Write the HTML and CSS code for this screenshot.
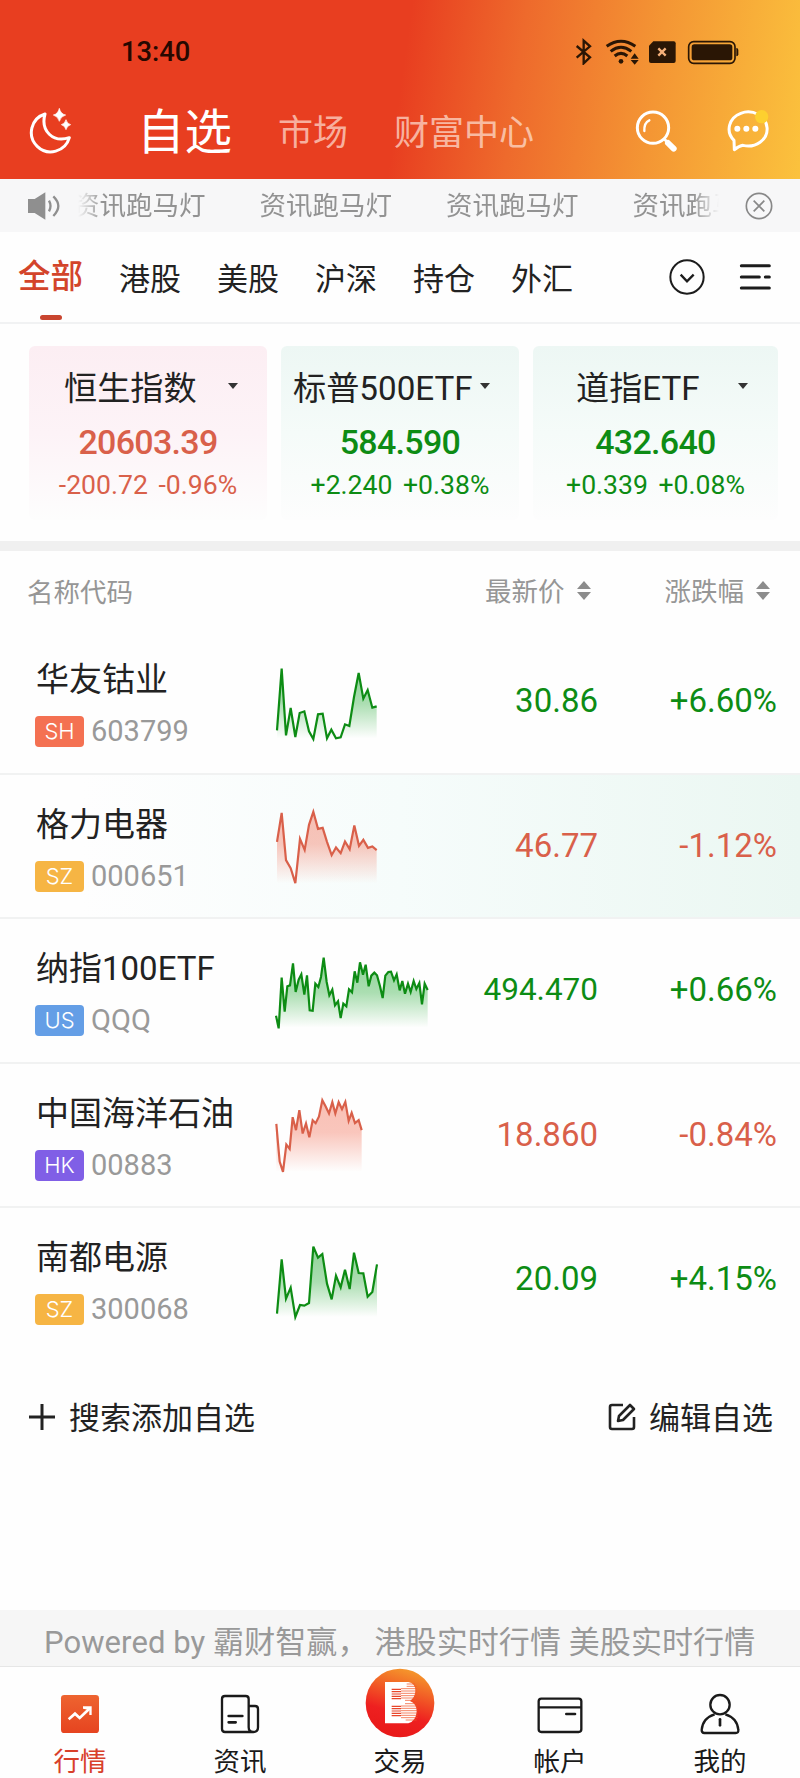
FILE: index.html
```
<!DOCTYPE html>
<html lang="zh-CN">
<head>
    <meta charset="utf-8">
    <title>自选</title>
    <meta name="viewport" content="width=device-width, initial-scale=1.0">
    <link rel="stylesheet" href="styles.css">
</head>
<body>
<header class="header">
    <div class="status">
        <span class="status-time">13:40</span>
        <svg class="status-icons" width="164" height="28" viewBox="0 0 492 84">
            <!-- bluetooth -->
            <path d="M5 27 45 61 26 79V11L45 28 5 62" fill="none" stroke="#2a1605" stroke-width="7"/>
            <!-- wifi -->
            <g fill="none" stroke="#2a1605" stroke-width="9">
                <path d="M95 28Q138-2 181 28"/>
                <path d="M107 43Q138 19 169 43"/>
                <path d="M119 57Q138 41 157 57"/>
            </g>
            <g fill="#2a1605">
                <circle cx="138" cy="73" r="7"/>
                <path d="M167 65 179 49 191 65zM167 69 179 83 191 69z"/>
                <path d="M235 13H296Q302 13 302 19V72Q302 78 296 78H228Q222 78 222 72V26z"/>
                <rect x="350" y="22" width="122" height="48" rx="8"/>
                <path d="M484 33q6 0 6 6v13q0 6-6 6z"/>
            </g>
            <path d="M250 34 272 56M272 34 250 56" stroke="#f5b07a" stroke-width="7"/>
            <rect x="341" y="14" width="139" height="65" rx="15" fill="none" stroke="#2a1605" stroke-width="5"/>
        </svg>
    </div>
    <nav class="nav">
        <svg class="icon-moon" width="44" height="48" viewBox="88 318 132 144">
            <path d="M136 339A58 58 0 1 0 209 410C160 426 122 390 136 339z" fill="none" stroke="#fff" stroke-width="9" stroke-linejoin="round"/>
            <path d="M179 322Q183 339 198 342 183 346 179 361 175 346 161 342 175 339 179 322zM199 356Q202 368 213 371 202 374 199 386 196 374 185 371 196 368 199 356z" fill="#fff" stroke="#fff" stroke-width="2"/>
        </svg>
        <a class="nav-link nav-current">自选</a>
        <a class="nav-link">市场</a>
        <a class="nav-link">财富中心</a>
        <svg class="icon-search" width="44" height="46" viewBox="706 322 132 138">
            <circle cx="763" cy="381" r="47" fill="none" stroke="#fff" stroke-width="9"/>
            <path d="M737 391Q736 366 752 359" fill="none" stroke="#fff" stroke-width="7" stroke-linecap="round"/>
            <path d="M796 415 806 424" stroke="#fff" stroke-width="9"/>
            <path d="M808 427 825 444" stroke="#fff" stroke-width="18" stroke-linecap="round"/>
        </svg>
        <svg class="icon-chat" width="46" height="46" viewBox="976 322 138 138">
            <path d="M1007 447 1006 419A57 51 0 1 1 1033 434Q1022 436 1007 447z" fill="none" stroke="#fff" stroke-width="9" stroke-linejoin="round"/>
            <g fill="#fff">
                <circle cx="1016" cy="384" r="9"/>
                <circle cx="1043" cy="384" r="9"/>
                <circle cx="1070" cy="384" r="9"/>
            </g>
            <circle cx="1089" cy="348" r="20" fill="#fdd02f"/>
        </svg>
    </nav>
</header>

<section class="notice">
    <svg class="icon-speaker" width="34" height="30" viewBox="80 573 102 90">
        <path d="M83 597H103L135 577V659L103 639H83z" fill="#8f8f8f"/>
        <path d="M146 602Q155 618 146 634M159 589Q189 618 159 648" fill="none" stroke="#8f8f8f" stroke-width="7"/>
    </svg>
    <div class="marquee">
        <span>资讯跑马灯</span>
        <span>资讯跑马灯</span>
        <span>资讯跑马灯</span>
        <span>资讯跑马灯</span>
    </div>
    <svg class="icon-close" width="28" height="28" viewBox="0 0 84 84">
        <circle cx="42" cy="42" r="38" fill="none" stroke="#888" stroke-width="5"/>
        <path d="M26 26 58 58M58 26 26 58" stroke="#888" stroke-width="5"/>
    </svg>
</section>

<nav class="tabs">
    <a class="tab tab-current">全部</a>
    <a class="tab">港股</a>
    <a class="tab">美股</a>
    <a class="tab">沪深</a>
    <a class="tab">持仓</a>
    <a class="tab">外汇</a>
    <svg class="icon-more" width="36" height="36" viewBox="0 0 108 108" fill="none" stroke="#1c1c1c" stroke-width="6">
        <circle cx="54" cy="54" r="50"/>
        <path d="M35 47 54 67 74 47" stroke-width="7"/>
    </svg>
    <svg class="icon-menu" width="33" height="28" viewBox="0 0 99 84" stroke="#1c1c1c" stroke-width="9" stroke-linecap="round">
        <path d="M7 8H91M7 42H61M79 42H91M7 75H91"/>
    </svg>
</nav>

<section class="cards">
    <div class="card card-down">
        <h2 class="card-title"><span>恒生指数</span><i class="caret"></i></h2>
        <strong>20603.39</strong>
        <p>-200.72 <span>-0.96%</span></p>
    </div>
    <div class="card card-up">
        <h2 class="card-title card-title-long"><span>标普500ETF</span><i class="caret"></i></h2>
        <strong>584.590</strong>
        <p>+2.240 <span>+0.38%</span></p>
    </div>
    <div class="card card-up card-wide">
        <h2 class="card-title"><span>道指ETF</span><i class="caret"></i></h2>
        <strong>432.640</strong>
        <p>+0.339 <span>+0.08%</span></p>
    </div>
</section>

<main class="list">
    <svg width="0" height="0" class="defs">
        <linearGradient id="upFill" x1="0" y1="0" x2="0" y2="1">
            <stop offset="0" stop-color="#2fae3f" stop-opacity=".55"/>
            <stop offset=".5" stop-color="#2fae3f" stop-opacity=".4"/>
            <stop offset="1" stop-color="#2fae3f" stop-opacity="0"/>
        </linearGradient>
        <linearGradient id="downFill" x1="0" y1="0" x2="0" y2="1">
            <stop offset="0" stop-color="#f26a50" stop-opacity=".42"/>
            <stop offset=".45" stop-color="#f26a50" stop-opacity=".38"/>
            <stop offset="1" stop-color="#f26a50" stop-opacity="0"/>
        </linearGradient>
    </svg>

    <div class="list-head">
        <span class="col-name">名称代码</span>
        <span class="col-sort"><span>最新价</span> <i class="sort"></i></span>
        <span class="col-sort"><span>涨跌幅</span> <i class="sort"></i></span>
    </div>

    <div class="row up">
        <div class="stock">
            <h3>华友钴业</h3>
            <p><b class="badge sh">SH</b>603799</p>
        </div>
        <svg class="spark" viewBox="48 50 480 222">
            <path class="area" d="M51 264V240L65 55 78 255 92 173 106 260 119 188 133 183 147 243 160 264 174 192 188 190 201 264 214 238 228 264 242 261 255 222 268 227 282 140 296 68 310 145 323 119 337 172 350 168V264z"/>
            <polyline points="51,240 65,55 78,255 92,173 106,260 119,188 133,183 147,243 160,266 174,192 188,190 201,264 214,238 228,264 242,261 255,222 268,227 282,140 296,68 310,145 323,119 337,172 350,168"/>
        </svg>
        <span class="price">30.86</span>
        <span class="change">+6.60%</span>
    </div>

    <div class="row down row-active">
        <div class="stock">
            <h3>格力电器</h3>
            <p><b class="badge sz">SZ</b>000651</p>
        </div>
        <svg class="spark" viewBox="48 483.5 480 222">
            <path class="area" d="M51 700V576L65 489 78 631 92 655 106 700 120 567 134 600 147 525 160 486 174 537 188 534 201 576 215 616 228 593 242 610 255 575 269 598 283 527 297 588 310 570 324 594 337 590 350 601V700z"/>
            <polyline points="51,576 65,489 78,631 92,655 106,700 120,567 134,600 147,525 160,486 174,537 188,534 201,576 215,616 228,593 242,610 255,575 269,598 283,527 297,588 310,570 324,594 337,590 350,601"/>
        </svg>
        <span class="price">46.77</span>
        <span class="change">-1.12%</span>
    </div>

    <div class="row up">
        <div class="stock">
            <h3>纳指100ETF</h3>
            <p><b class="badge us">US</b>QQQ</p>
        </div>
        <svg class="spark" viewBox="48 47 480 222">
            <path class="area" d="M48 262V226L56 262 65 112 74 214 82 138 90 135 99 69 107 155 116 118 124 102 133 163 141 105 149 210 158 211 166 130 175 140 183 110 191 52 200 125 208 165 217 148 225 195 234 183 242 233 250 190 259 198 267 147 276 156 284 93 292 127 300 66 309 103 317 73 326 138 334 106 343 97 351 105 360 138 368 173 376 106 385 95 393 94 402 120 410 102 419 150 427 122 435 160 444 130 452 155 461 122 469 146 478 128 486 192 494 130 503 149V262z"/>
            <polyline points="48,226 56,264 65,112 74,214 82,138 90,135 99,69 107,155 116,118 124,102 133,163 141,105 149,210 158,211 166,130 175,140 183,110 191,52 200,125 208,165 217,148 225,195 234,183 242,233 250,190 259,198 267,147 276,156 284,93 292,127 300,66 309,103 317,73 326,138 334,106 343,97 351,105 360,138 368,173 376,106 385,95 393,94 402,120 410,102 419,150 427,122 435,160 444,130 452,155 461,122 469,146 478,128 486,192 494,130 503,149"/>
        </svg>
        <span class="price price-long">494.470</span>
        <span class="change">+0.66%</span>
    </div>

    <div class="row down">
        <div class="stock">
            <h3>中国海洋石油</h3>
            <p><b class="badge hk">HK</b>00883</p>
        </div>
        <svg class="spark" viewBox="48 480.5 480 222">
            <path class="area" d="M49 696V552L54 610 59 665 69 696 79 614 89 627 98 532 108 571 118 511 128 581 138 551 148 592 158 541 167 550 177 530 187 481 197 500 207 521 217 487 226 521 236 487 246 508 256 486 266 543 275 519 285 550 296 541 305 571V696z"/>
            <polyline points="49,552 54,610 59,665 69,696 79,614 89,627 98,532 108,571 118,511 128,581 138,551 148,592 158,541 167,550 177,530 187,481 197,500 207,521 217,487 226,521 236,487 246,508 256,486 266,543 275,519 285,550 296,541 305,571"/>
        </svg>
        <span class="price">18.860</span>
        <span class="change">-0.84%</span>
    </div>

    <div class="row up">
        <div class="stock">
            <h3>南都电源</h3>
            <p><b class="badge sz">SZ</b>300068</p>
        </div>
        <svg class="spark" viewBox="828 1004 480 222">
            <path class="area" d="M831 1220V1210L845 1047 858 1165 872 1132 886 1220 900 1184 913 1186 927 1178 940 1009 954 1042 967 1031 981 1120 995 1167 1008 1096 1022 1131 1035 1078 1049 1136 1062 1027 1076 1088 1090 1089 1103 1159 1117 1145 1131 1062V1220z"/>
            <polyline points="831,1210 845,1047 858,1165 872,1132 886,1220 900,1184 913,1186 927,1178 940,1009 954,1042 967,1031 981,1120 995,1167 1008,1096 1022,1131 1035,1078 1049,1136 1062,1027 1076,1088 1090,1089 1103,1159 1117,1145 1131,1062"/>
        </svg>
        <span class="price">20.09</span>
        <span class="change">+4.15%</span>
    </div>
</main>

<div class="actions">
    <a class="action">
        <svg width="28" height="28" viewBox="0 0 28 28" stroke="#222" stroke-width="3"><path d="M14 1V27M1 14H27"/></svg>
        <span>搜索添加自选</span>
    </a>
    <a class="action">
        <svg width="28" height="28" viewBox="0 0 28 28" fill="none" stroke="#222" stroke-width="2.6" stroke-linejoin="round">
            <path d="M15 2H4Q2 2 2 4V24Q2 26 4 26H24Q26 26 26 24V14"/>
            <path d="M10 18 11 13 22 2 26 6 15 17z"/>
        </svg>
        <span>编辑自选</span>
    </a>
</div>

<p class="powered">Powered by 霸财智赢<span class="comma">，</span>港股实时行情 美股实时行情</p>

<footer class="tabbar">
    <a class="tabbar-item tabbar-current">
        <svg width="44" height="44" viewBox="0 0 132 132">
            <defs>
                <linearGradient id="quote" x1="0" y1="0" x2="0" y2="1">
                    <stop offset="0" stop-color="#ee6430"/>
                    <stop offset="1" stop-color="#e64420"/>
                </linearGradient>
            </defs>
            <rect x="9" y="9" width="114" height="114" rx="10" fill="url(#quote)"/>
            <path d="M32 82 51 65 65 78 94 50" fill="none" stroke="#fff" stroke-width="8"/>
            <path d="M75 43H101V69L94 69V54L75 50z" fill="#fff"/>
        </svg>
        行情
    </a>
    <a class="tabbar-item">
        <svg width="44" height="44" viewBox="0 0 132 132" fill="none" stroke="#1a1a1a" stroke-width="7">
            <path d="M109 120H21Q12 120 12 111V21Q12 12 21 12H83Q92 12 92 21V106Q92 120 106 120 120 120 120 106V51Q120 42 111 42H92"/>
            <path d="M32 72H73M32 91H53" stroke-width="8" stroke-linecap="round"/>
        </svg>
        资讯
    </a>
    <a class="tabbar-item tabbar-trade">
        <svg width="70" height="70" viewBox="0 0 210 210">
            <defs>
                <linearGradient id="trade" x1=".65" y1="0" x2=".35" y2="1">
                    <stop offset="0" stop-color="#f59a2c"/>
                    <stop offset=".65" stop-color="#ee2020"/>
                    <stop offset="1" stop-color="#e81818"/>
                </linearGradient>
            </defs>
            <circle cx="105" cy="105" r="103" fill="url(#trade)"/>
            <path d="M60 42H130Q152 46 151 70 150 88 135 99 156 108 155 131 153 158 130 166H60z" fill="#fff"/>
            <path d="M80 64H108M80 71H108M80 78H108M80 85H108M80 92H108M80 115H108M80 122H108M80 129H108M80 136H108M80 143H108" stroke="#e8452a" stroke-width="3.5"/>
            <path d="M125 48H150M125 55H155M108 62H155M108 69H155M108 76H155M108 83H155M108 90H155M120 97H155M120 107H155M108 114H158M108 121H158M108 128H158M108 135H158M108 142H158M108 149H158M122 156H155" stroke="#f1562a" stroke-width="2.2"/>
        </svg>
        交易
    </a>
    <a class="tabbar-item">
        <svg width="46" height="44" viewBox="0 0 138 132" fill="none" stroke="#1a1a1a" stroke-width="7">
            <rect x="5" y="20" width="128" height="100" rx="8"/>
            <path d="M5 46H133"/>
            <path d="M88 66H114" stroke-width="8" stroke-linecap="round"/>
        </svg>
        帐户
    </a>
    <a class="tabbar-item">
        <svg width="44" height="44" viewBox="0 0 132 132" fill="none" stroke="#1a1a1a" stroke-width="7">
            <circle cx="66" cy="38" r="29"/>
            <path d="M50 67Q14 78 11 114 11 123 19 123H113Q122 123 121 114 118 78 82 67"/>
            <path d="M66 82V100" stroke-width="8" stroke-linecap="round"/>
        </svg>
        我的
    </a>
</footer>
</body>
</html>
```
FILE: styles.css
```
* {
    box-sizing: border-box;
}

body {
    margin: 0;
    width: 800px;
    height: 1778px;
    display: flex;
    flex-direction: column;
    overflow: hidden;
    background: #fefefe;
    color: #222;
    font-family: Roboto, "Noto Sans CJK SC", sans-serif;
    font-size: 31px;
    line-height: 1;
}

h2, h3, p {
    margin: 0;
    font-weight: normal;
}

svg {
    display: block;
    flex: none;
}

a, span {
    white-space: nowrap;
}

/* header */
.header {
    height: 179px;
    background: linear-gradient(98deg, #e83e20 0%, #e83e20 50%, #ee6a2c 64%, #f49634 81%, #fbc23d 100%);
}

.status {
    height: 101px;
    padding: 0 61px 0 121px;
    display: flex;
    align-items: center;
    justify-content: space-between;
}

.status-time {
    color: #260800;
    font-size: 27.3px;
    font-weight: 500;
    padding-top: 4px;
}

.nav {
    height: 60px;
    padding: 0 30px 0 29px;
    display: flex;
    align-items: center;
    color: #fff;
}

.nav-link {
    margin-left: 46px;
    padding-top: 4px;
    font-size: 35px;
    color: rgba(255, 235, 225, .68);
}

.nav-current {
    margin: 0 0 0 64px;
    padding-top: 5px;
    font-size: 47.5px;
    color: #fff;
}

.icon-search {
    margin-left: auto;
}

.icon-chat {
    margin-left: 46px;
}

/* news marquee */
.notice {
    height: 53px;
    padding: 0 27px;
    display: flex;
    align-items: center;
    background: #f7f7f8;
    color: #929292;
}

.marquee {
    width: 648px;
    margin-left: 12px;
    display: flex;
    gap: 54px;
    overflow: hidden;
    font-size: 26.5px;
    line-height: 44px;
    -webkit-mask-image: linear-gradient(90deg, transparent 5px, #000 30px, #000 620px, transparent 646px);
    mask-image: linear-gradient(90deg, transparent 5px, #000 30px, #000 620px, transparent 646px);
}

.marquee span {
    padding-top: 1px;
}

.icon-close {
    margin-left: auto;
}

/* market tabs */
.tabs {
    height: 92px;
    padding: 0 28px 0 18px;
    display: flex;
    align-items: center;
    gap: 36px;
    border-bottom: 2px solid #f1f2f3;
}

.tab {
    height: 90px;
    line-height: 95px;
    font-size: 31px;
}

.tab-current {
    display: flex;
    flex-direction: column;
    align-items: center;
    color: #d3442a;
    font-size: 32.5px;
    font-weight: 500;
    line-height: 91px;
}

.tab-current::after {
    content: "";
    width: 22px;
    height: 5px;
    margin-top: -8px;
    border-radius: 3px;
    background: #c9452f;
    flex: none;
}

.icon-more {
    margin-left: auto;
}

.icon-menu {
    margin-left: -2px;
}

/* index cards */
.cards {
    height: 217px;
    padding: 22px 22px 0 29px;
    display: flex;
    gap: 14px;
}

.card {
    width: 238px;
    height: 174px;
    border-radius: 6px;
    display: flex;
    flex-direction: column;
    align-items: center;
}

.card-wide {
    width: 245px;
}

.card-down {
    color: #d9604a;
    background: linear-gradient(#fceef3, #fdf3f7 50%, #fdfdfd);
}

.card-up {
    color: #0d8c14;
    background: linear-gradient(#edf7f4, #f5fbf9 50%, #fdfdfd);
}

.card-title {
    width: 100%;
    padding: 0 29px 0 35px;
    display: flex;
    align-items: center;
    justify-content: space-between;
    color: #222;
    font-size: 33.2px;
    height: 80px;
}

.card-title span {
    padding-top: 5px;
}

.card-title-long {
    padding: 0 29px 0 12px;
}

.card-wide .card-title {
    padding: 0 30px 0 43px;
}

.caret {
    border: 5px solid transparent;
    border-top: 6px solid #333;
    border-bottom: 0;
}

.card strong {
    font-size: 34px;
    font-weight: 500;
    line-height: 33px;
    letter-spacing: -.7px;
}

.card p {
    margin-top: 12px;
    font-size: 26.6px;
    line-height: 27px;
}

.card p span {
    margin-left: 4px;
}

/* stock list */
.list {
    border-top: 10px solid #f0f0f0;
}

.defs {
    position: absolute;
}

.list-head {
    height: 79px;
    padding: 0 30px 0 27px;
    display: flex;
    color: #969696;
    font-size: 26.5px;
    line-height: 84px;
}

.col-name {
    flex: 1;
}

.col-sort {
    display: flex;
    align-items: center;
    gap: 12px;
    margin-left: 74px;
}

.col-sort span {
    padding-top: 3px;
}

.sort::before,
.sort::after {
    content: "";
    display: block;
    border: 7px solid transparent;
}

.sort::before {
    border-top: 0;
    border-bottom: 8px solid #8c8c8c;
}

.sort::after {
    margin-top: 3px;
    border-bottom: 0;
    border-top: 8px solid #8c8c8c;
}

.row {
    height: 144.5px;
    padding: 0 23px 0 35px;
    display: flex;
    border-bottom: 2px solid #f1f2f2;
}

.row:last-child {
    border-bottom: 0;
}

.row-active {
    background: linear-gradient(90deg, #fefefe 10%, #f6fcfb 50%, #ebf7f2);
}

.up {
    color: #0d8c14;
}

.down {
    color: #d9604a;
}

.stock {
    width: 241px;
    padding-top: 27px;
    color: #222;
}

.stock h3 {
    padding-left: 1px;
    font-size: 33px;
    line-height: 46px;
    white-space: nowrap;
}

.stock p {
    margin-top: 12px;
    display: flex;
    align-items: center;
    color: #999;
    font-size: 29px;
    line-height: 33px;
}

.badge {
    width: 49px;
    height: 31px;
    margin-right: 7px;
    border-radius: 4px;
    color: #fff;
    font-family: Inter, Roboto, sans-serif;
    font-size: 22px;
    font-weight: 300;
    line-height: 31px;
    text-align: center;
}

.sh {
    background: #f47152;
}

.sz {
    background: #f6b544;
}

.us {
    background: #649ee6;
}

.hk {
    background: #805fe6;
}

.spark {
    width: 160px;
    height: 74px;
    margin-top: 36.67px;
    overflow: visible;
}

.spark polyline {
    fill: none;
    stroke: currentColor;
    stroke-width: 6.6;
}

.up .area {
    fill: url(#upFill);
}

.down .area {
    fill: url(#downFill);
}

.price,
.change {
    font-size: 33px;
    line-height: 141px;
    text-align: right;
}

.price {
    width: 162px;
}

.price-long {
    font-size: 31.5px;
}

.change {
    flex: 1;
}

/* search / edit */
.actions {
    height: 257px;
    padding: 44px 27px 0 28px;
    display: flex;
    align-items: flex-start;
    justify-content: space-between;
}

.action {
    display: flex;
    align-items: center;
    gap: 13px;
    height: 40px;
}

.action span {
    padding-top: 3px;
}

.powered {
    height: 56px;
    padding-left: 44px;
    background: #f6f6f6;
    color: #999;
    letter-spacing: .08px;
    line-height: 65px;
    white-space: nowrap;
}

.comma {
    margin-right: 6px;
}

/* bottom bar */
.tabbar {
    height: 112px;
    display: flex;
    border-top: 1px solid #e6e6e6;
}

.tabbar-item {
    flex: 1;
    display: flex;
    flex-direction: column;
    align-items: center;
    padding-top: 25px;
    color: #1a1a1a;
    font-size: 26.5px;
    line-height: 52px;
}

.tabbar-trade {
    padding-top: 1px;
}

.tabbar-trade svg {
    margin-bottom: -2px;
}

.tabbar-current {
    color: #d8402a;
}
```
